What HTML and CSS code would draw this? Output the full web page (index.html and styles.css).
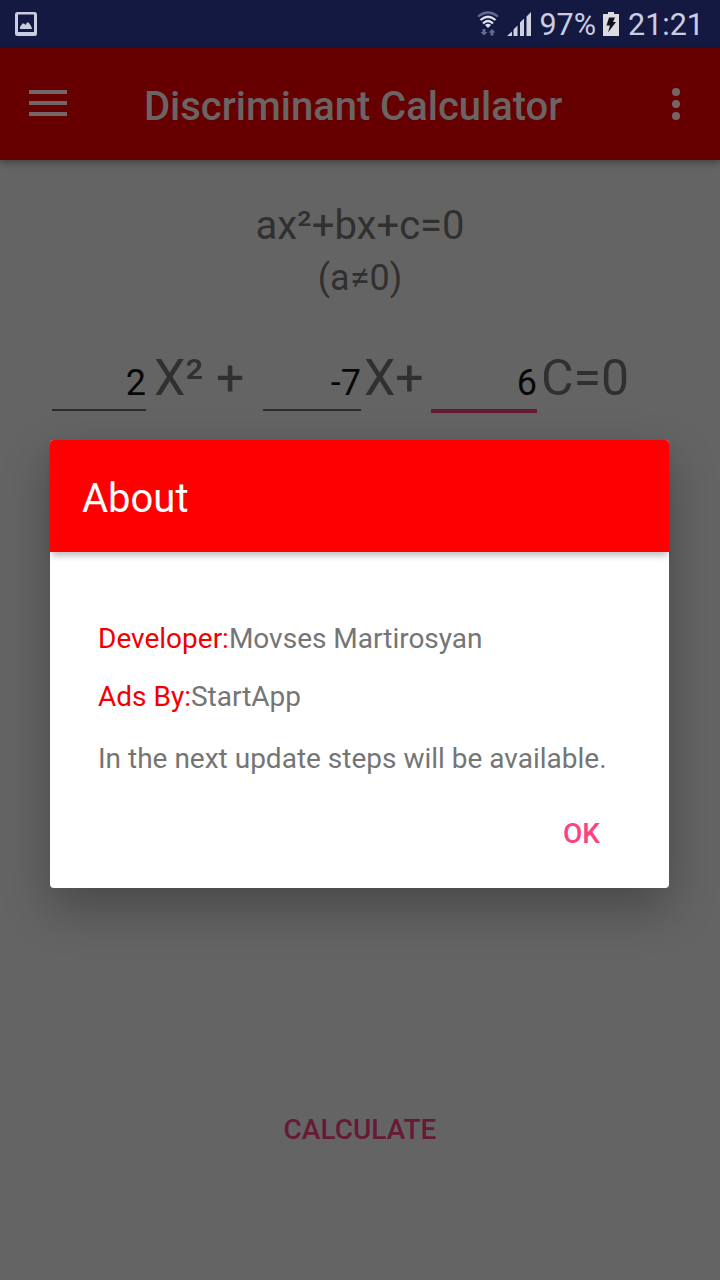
FILE: index.html
```html
<!DOCTYPE html>
<html lang="en">
<head>
    <meta charset="UTF-8">
    <meta name="viewport" content="width=device-width, initial-scale=1.0">
    <title>Discriminant Calculator</title>
    <link rel="stylesheet" href="styles.css">
</head>
<body>
    <div class="status-bar">
        <svg class="picture-icon" width="22" height="24" viewBox="0 0 22 24">
            <path fill="#c9cde2" fill-rule="evenodd" d="M2.500 0h17A2.500 2.500 0 0 1 22 2.500v19a2.500 2.500 0 0 1-2.500 2.500h-17A2.500 2.500 0 0 1 0 21.500v-19A2.500 2.500 0 0 1 2.500 0zM3 2.500v17.500h16V2.500z"/>
            <path fill="#c9cde2" d="M5 17v-2l2.500-3.500 1.500 0 1.500 1.500 1.500-2.500h1.500l1.500 2 1.500 2.500 0.500 2z"/>
        </svg>
        <div class="status-right">
            <svg class="wifi-icon" width="22" height="26" viewBox="0 0 22 26">
                <g fill="none" stroke-width="2.200">
                    <path stroke="#646b91" d="M1 5.500Q11-2.500 21 5.500"/>
                    <path stroke="#e0e2ec" d="M3.500 9Q11 2.500 18.500 9"/>
                    <path stroke="#e0e2ec" d="M6 12.500Q11 7.500 16 12.500"/>
                </g>
                <path fill="#e0e2ec" d="M8 14Q11 11.500 14 14L11 17z"/>
                <path fill="#646b91" d="M5.500 18h3v3h2L7 24.500 3.500 21h2zM13.500 24.500v-3h-2L15 18l3.500 3.500h-2v3z"/>
            </svg>
            <svg class="signal-icon" width="24" height="24" viewBox="0 0 24 24">
                <path fill="#cfd1df" d="M0 24l5-4.500V24zM6.500 24v-6.500l4-4V24zM13 24V10.500l4-4V24zM19.500 24V4.500L24 0v24z"/>
            </svg>
            <span class="battery-text">97%</span>
            <svg class="battery-icon" width="16" height="24" viewBox="0 0 16 24">
                <path fill="#dcdce0" d="M5 0h6v2h5v22H0V2h5z"/>
                <path fill="#101018" d="M6 5.500h6L10 10h3L5 20.500 7 13.500H3.500z"/>
            </svg>
            <span class="clock">21:21</span>
        </div>
    </div>

    <div class="app-bar">
        <div class="menu-icon">
            <span></span>
            <span></span>
            <span></span>
        </div>
        <h1>Discriminant Calculator</h1>
        <div class="more-icon">
            <span></span>
            <span></span>
            <span></span>
        </div>
    </div>

    <div class="content">
        <p class="formula">ax²+bx+c=0</p>
        <p class="condition">(a≠0)</p>

        <div class="equation">
            <span class="field field-a">2</span>
            <span class="term term-a">X² +</span>
            <span class="field field-b">-7</span>
            <span class="term term-b">X+</span>
            <span class="field field-c active">6</span>
            <span class="term term-c">C=0</span>
        </div>

        <div class="calculate">CALCULATE</div>
    </div>

    <!-- About dialog -->
    <div class="dialog">
        <div class="dialog-title">About</div>
        <div class="dialog-body">
            <p><span class="label">Developer:</span>Movses Martirosyan</p>
            <p><span class="label">Ads By:</span>StartApp</p>
            <p class="note">In the next update steps will be available.</p>
            <div class="ok-button">OK</div>
        </div>
    </div>
</body>
</html>
```

FILE: styles.css
```css
body {
    margin: 0;
    width: 720px;
    height: 1280px;
    overflow: hidden;
    position: relative;
    background: #646464;
    font-family: Roboto, sans-serif;
}
p, h1 {
    margin: 0;
}
.status-bar {
    height: 48px;
    padding: 0 16px 0 15px;
    box-sizing: border-box;
    display: flex;
    align-items: center;
    justify-content: space-between;
    background: #141941;
    color: #c9cde2;
    font-size: 30.5px;
}
.status-right {
    display: flex;
    align-items: center;
    line-height: 48px;
}
.status-right span {
    padding-top: 2px;
    line-height: 46px;
}
.wifi-icon {
    margin-right: 8px;
}
.signal-icon {
    margin-right: 8px;
}
.battery-text {
    margin-right: 7px;
}
.battery-icon {
    margin-right: 9px;
}
.app-bar {
    height: 112px;
    box-sizing: border-box;
    padding: 0 40px 0 29px;
    display: flex;
    align-items: center;
    background: #660000;
    box-shadow: 0 2px 8px rgba(0, 0, 0, 0.4);
}
.app-bar h1 {
    flex: 1;
    margin-left: 77px;
    padding-top: 6px;
    font-size: 40px;
    font-weight: 500;
    line-height: 48px;
    letter-spacing: -0.03px;
    color: #6b6464;
}
.menu-icon {
    width: 38px;
    display: flex;
    flex-direction: column;
    gap: 7px;
    padding-bottom: 2px;
}
.menu-icon span {
    height: 4px;
    background: #746666;
}
.more-icon {
    display: flex;
    flex-direction: column;
    gap: 4px;
}
.more-icon span {
    width: 8px;
    height: 8px;
    border-radius: 50%;
    background: #746666;
}
.content {
    color: #303030;
    text-align: center;
}
.formula {
    padding-top: 42px;
    font-size: 40px;
    line-height: 48px;
}
.condition {
    font-size: 36px;
    line-height: 56px;
}
.equation {
    height: 60px;
    margin-top: 42px;
    padding-left: 52px;
    display: flex;
    align-items: baseline;
    white-space: nowrap;
}
.field {
    height: 49px;
    border-bottom: 2px solid #2c2c2c;
    font-size: 36px;
    line-height: 46px;
    text-align: right;
    color: #080808;
}
.field-a {
    width: 94px;
}
.field-b {
    width: 98px;
}
.field-c {
    width: 106px;
}
.field.active {
    border-bottom: 4px solid #661a36;
}
.term {
    font-size: 50px;
    line-height: 60px;
    text-align: left;
}
.term-a {
    width: 109px;
    padding-left: 8px;
}
.term-b {
    width: 67px;
    padding-left: 3px;
}
.term-c {
    padding-left: 4px;
}
.calculate {
    margin-top: 702px;
    font-size: 28px;
    font-weight: 500;
    line-height: 40px;
    color: #661a36;
}
.dialog {
    position: absolute;
    top: 440px;
    left: 50px;
    width: 619px;
    height: 448px;
    border-radius: 4px;
    background: #fff;
    box-shadow: 0 20px 48px rgba(0, 0, 0, 0.28);
}
.dialog-title {
    height: 112px;
    box-sizing: border-box;
    padding: 5px 32px 0;
    border-radius: 4px 4px 0 0;
    background: #fe0000;
    box-shadow: 0 6px 6px -2px rgba(0, 0, 0, 0.25);
    color: #fff;
    font-size: 40px;
    line-height: 108px;
}
.dialog-body {
    padding: 67px 48px 0;
    color: #757575;
    font-size: 28px;
    line-height: 40px;
}
.dialog-body p {
    margin-bottom: 18px;
}
.label {
    color: #f20000;
}
.dialog-body .note {
    margin-top: 22px;
    white-space: nowrap;
}
.ok-button {
    margin-top: 35px;
    padding-right: 21px;
    text-align: right;
    font-weight: 500;
    color: #ff4081;
}
```
